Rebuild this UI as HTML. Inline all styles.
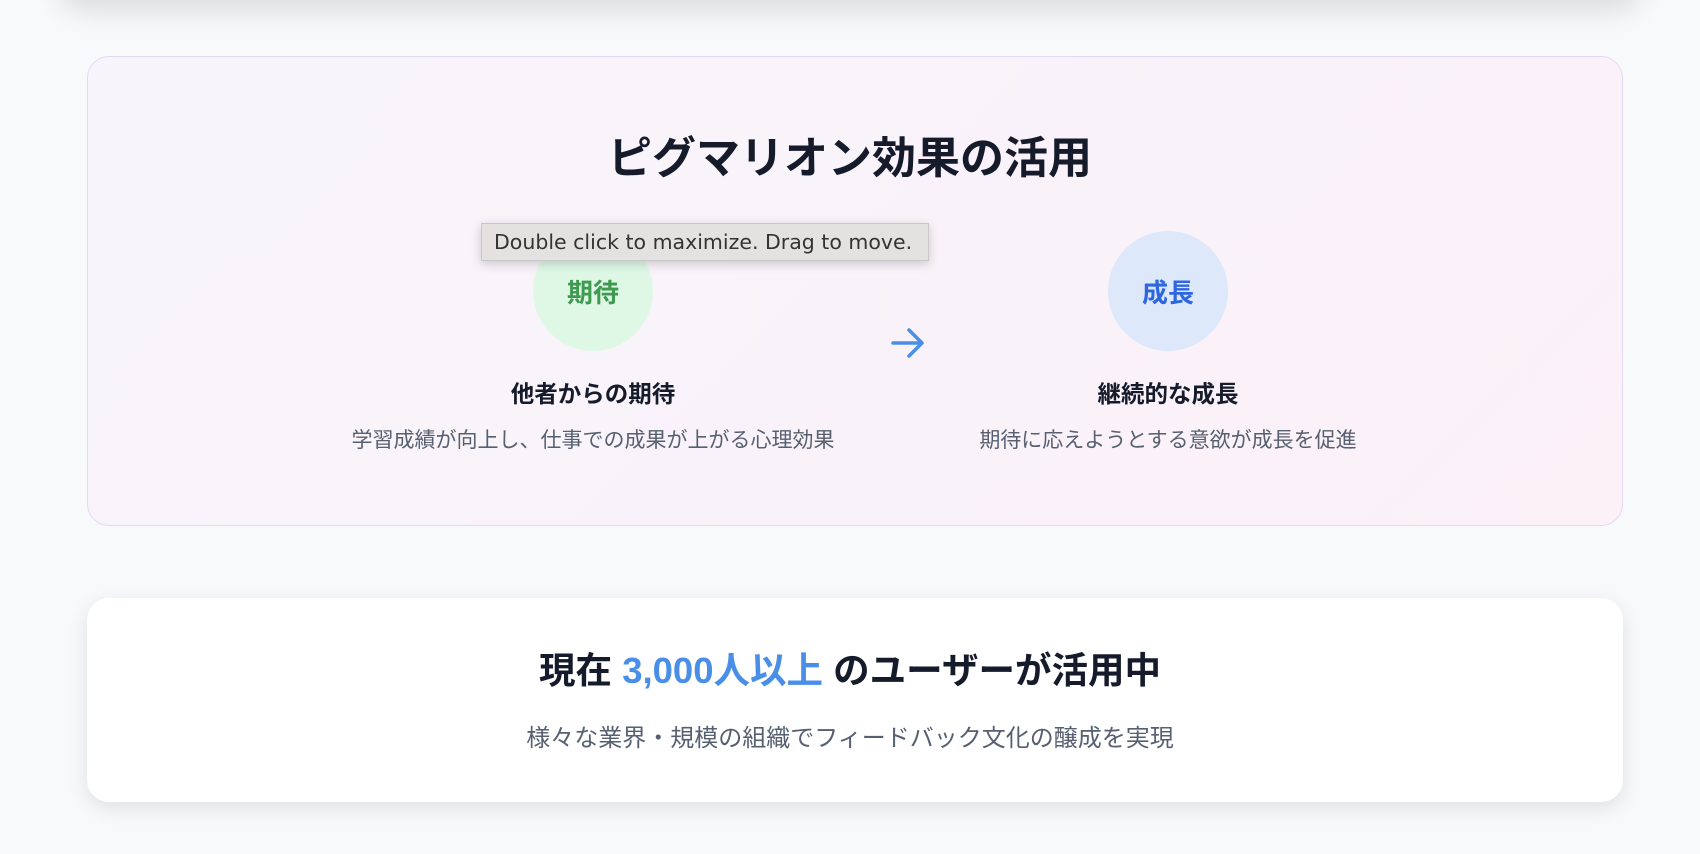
<!DOCTYPE html>
<html><head><meta charset="utf-8"><style>
*{margin:0;padding:0;box-sizing:border-box}
html,body{width:1700px;height:854px;overflow:hidden;background:#f8f9fb;font-family:"Liberation Sans","Noto Sans CJK JP",sans-serif}
.top{position:absolute;left:60px;top:-60px;width:1580px;height:60px;background:#fff;box-shadow:0 10px 28px rgba(0,0,0,.12);border-radius:20px}
.card1{position:absolute;left:87px;top:56px;width:1536px;height:470px;border:1px solid #e4d8f6;border-radius:22px;background:linear-gradient(135deg,#f8f4fc,#fbf1f7)}
.title{position:absolute;left:0;right:0;top:122px;text-align:center;font-size:44px;font-weight:bold;color:#151b2b}
.circ{position:absolute;width:120px;height:120px;border-radius:50%;display:flex;align-items:center;justify-content:center;font-size:26px;font-weight:bold}
.h{position:absolute;width:600px;text-align:center;font-size:23.5px;font-weight:bold;color:#151b2b}
.p{position:absolute;width:600px;text-align:center;font-size:21px;color:#566070}
.tip{position:absolute;left:481px;top:223px;width:448px;height:38px;background:#e3e2e0;border:1px solid #c8c8c8;box-shadow:0 3px 10px rgba(0,0,0,.18);font-size:20.5px;color:#333;padding-left:12px;line-height:36px;font-family:"DejaVu Sans",sans-serif;white-space:nowrap}
.card2{position:absolute;left:87px;top:598px;width:1536px;height:204px;background:#fff;border-radius:22px;box-shadow:0 6px 20px rgba(0,0,0,.10)}
</style></head><body>
<div class="top"></div>
<div class="card1"></div>
<div class="title">ピグマリオン効果の活用</div>
<div class="circ" style="left:533px;top:231px;background:#dff8e6;color:#3d9a4f">期待</div>
<div class="circ" style="left:1108px;top:231px;background:#dde8fa;color:#2f66e0">成長</div>
<svg style="position:absolute;left:890px;top:325px" width="36" height="36" viewBox="0 0 36 36"><path d="M3 18H32M19 5L32 18L19 31" fill="none" stroke="#4a8fe7" stroke-width="3.5" stroke-linecap="round" stroke-linejoin="round"/></svg>
<div class="h" style="left:293px;top:375px">他者からの期待</div>
<div class="p" style="left:293px;top:424px">学習成績が向上し、仕事での成果が上がる心理効果</div>
<div class="h" style="left:868px;top:375px">継続的な成長</div>
<div class="p" style="left:868px;top:424px">期待に応えようとする意欲が成長を促進</div>
<div class="tip">Double click to maximize. Drag to move.</div>
<div class="card2"></div>
<div style="position:absolute;left:0;right:0;top:641px;text-align:center;font-size:36.5px;font-weight:bold;color:#151b2b">現在 <span style="color:#4a8fe7">3,000人以上</span> のユーザーが活用中</div>
<div style="position:absolute;left:0;right:0;top:718px;text-align:center;font-size:24px;color:#566070">様々な業界・規模の組織でフィードバック文化の醸成を実現</div>
</body></html>
